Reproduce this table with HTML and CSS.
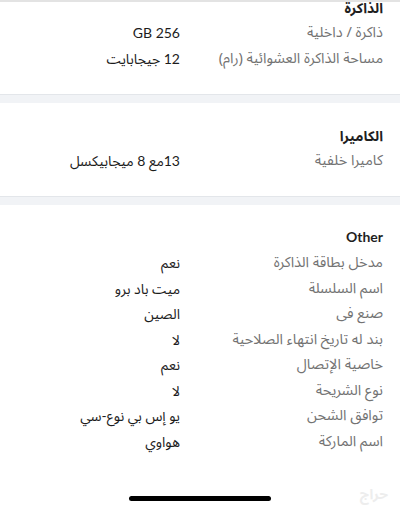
FILE: index.html
```html
<!DOCTYPE html>
<html lang="ar" dir="rtl">
<head>
<meta charset="utf-8">
<link rel="stylesheet" href="styles.css">
</head>
<body>
<div class="page">
  <section class="section first">
    <h2 class="heading">الذاكرة</h2>
    <div class="row"><span class="label">ذاكرة / داخلية</span><span class="value">GB 256</span></div>
    <div class="row"><span class="label">مساحة الذاكرة العشوائية (رام)</span><span class="value">12 جيجابايت</span></div>
  </section>
  <div class="sep"></div>
  <section class="section">
    <h2 class="heading">الكاميرا</h2>
    <div class="row"><span class="label">كاميرا خلفية</span><span class="value">13مع 8 ميجابيكسل</span></div>
  </section>
  <div class="sep"></div>
  <section class="section other">
    <h2 class="heading">Other</h2>
    <div class="row"><span class="label">مدخل بطاقة الذاكرة</span><span class="value">نعم</span></div>
    <div class="row"><span class="label">اسم السلسلة</span><span class="value">ميت باد برو</span></div>
    <div class="row"><span class="label">صنع فى</span><span class="value">الصين</span></div>
    <div class="row"><span class="label">بند له تاريخ انتهاء الصلاحية</span><span class="value">لا</span></div>
    <div class="row"><span class="label">خاصية الإتصال</span><span class="value">نعم</span></div>
    <div class="row"><span class="label">نوع الشريحة</span><span class="value">لا</span></div>
    <div class="row"><span class="label">توافق الشحن</span><span class="value">يو إس بي نوع-سي</span></div>
    <div class="row"><span class="label">اسم الماركة</span><span class="value">هواوي</span></div>
  </section>
  <div class="homebar"></div>
  <div class="watermark">حراج</div>
</div>
</body>
</html>
```
FILE: styles.css
```css
html, body {
  margin: 0;
  padding: 0;
  background: #ffffff;
}
body {
  font-family: "Noto Sans Arabic", "Lato", "Noto Sans", "DejaVu Sans", sans-serif;
  color: #222222;
  width: 400px;
  height: 509px;
  overflow: hidden;
}
.page {
  position: relative;
  height: 509px;
  border-top: 2px solid #e3e3e3;
  box-sizing: border-box;
}
.section {
  padding: 21px 17px 22px 0;
}
.section.first {
  padding-top: 0;
  margin-top: -6px;
}
.section.other {
  padding-top: 19px;
}
.heading {
  margin: 0;
  font-family: "Lato", "Noto Sans Arabic", "DejaVu Sans", sans-serif;
  font-size: 14px;
  font-weight: 700;
  line-height: 24px;
  color: #1f1f1f;
}
.row {
  display: grid;
  grid-template-columns: 203px auto;
  font-size: 14.5px;
  line-height: 26px;
}
.other .row {
  line-height: 25.5px;
}
.other .heading {
  line-height: 26px;
}
.label {
  color: #737373;
}
.value {
  color: #1c1c1c;
  font-family: "Lato", "Noto Sans Arabic", "DejaVu Sans", sans-serif;
  font-size: 14px;
  font-weight: 400;
}
.sep {
  height: 8px;
  background: #f1f3f6;
  border-top: 1px solid #e3e6ea;
}
.homebar {
  position: absolute;
  left: 129px;
  top: 494px;
  width: 142px;
  height: 5px;
  border-radius: 3px;
  background: #000000;
}
.watermark {
  position: absolute;
  right: 12px;
  top: 484px;
  font-size: 14px;
  line-height: 18px;
  color: #ededed;
  font-weight: 700;
}
```
